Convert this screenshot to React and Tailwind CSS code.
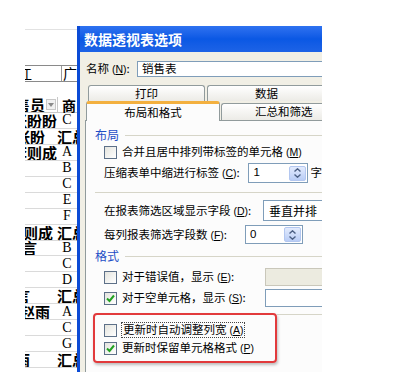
const rows = [
  { name: '张盼盼', code: 'C', pr: 0 },
  { name: '张盼', total: true, pr: 12 },
  { name: '李则成', code: 'A', pr: 0 },
  { name: '', code: 'B' },
  { name: '', code: 'C' },
  { name: '', code: 'E' },
  { name: '', code: 'F' },
  { name: '李则成', total: true, pr: 4 },
  { name: '刘语言', code: 'B', pr: 20 },
  { name: '', code: 'C' },
  { name: '', code: 'D' },
  { name: '刘语言', total: true, pr: 27 },
  { name: '赵雨', code: 'A', pr: 7 },
  { name: '', code: 'C' },
  { name: '', code: 'G' },
  { name: '赵雨', total: true, pr: 27 },
  { name: '', code: '' },
];

function Sheet() {
  return (
    <div className="mt-[26px] flex h-[346px] w-[52px] shrink-0 flex-col overflow-hidden bg-white font-['Noto_Sans_CJK_SC',sans-serif] text-black">
      <div className="h-[4px] shrink-0 border-b border-[#e2e2e2]" />
      <div className="mt-[35px] flex h-[17px] shrink-0 border-y border-[#8a8a8a]">
        <div className="flex w-[7px] shrink-0 justify-end overflow-hidden whitespace-nowrap text-[14px] leading-[15px]">江</div>
        <div className="w-[30px] shrink-0 border-r border-[#9a9a9a]" />
        <div className="shrink-0 pl-[1px] text-[14px] leading-[15px]">广</div>
      </div>
      <div className="mt-[15px] flex h-[16px] shrink-0 border-b border-[#c8c8c8]">
        <div className="flex w-[20px] shrink-0 items-center justify-end overflow-hidden whitespace-nowrap text-[15px] font-bold leading-none">售员</div>
        <div className="ml-[1px] mt-[2px] flex h-[11px] w-[10px] shrink-0 items-center justify-center border border-[#c8c8c8] bg-[#f0f0f0]">
          <svg width="6" height="4" viewBox="0 0 6 4"><path d="M0 0h6L3 4z" fill="#8a8a8a" /></svg>
        </div>
        <div className="ml-[1px] w-[20px] shrink-0 border-l border-[#c8c8c8] pl-[4px] text-[14px] font-bold leading-[16px]">商</div>
      </div>
      {rows.map((r, i) => (
        <div key={i} className="flex h-[15.95px] shrink-0 border-b border-[#dadada]">
          <div
            className="flex w-[32px] shrink-0 items-center justify-end overflow-hidden whitespace-nowrap text-[15px] font-bold leading-none"
            style={{ paddingRight: r.pr || 0 }}
          >
            {r.name}
          </div>
          {r.total ? (
            <div className="flex shrink-0 items-center whitespace-nowrap text-[15px] font-bold leading-none">汇总</div>
          ) : (
            <div className="flex w-[20px] shrink-0 items-center justify-center font-['Liberation_Serif',serif] text-[14px] leading-none">{r.code}</div>
          )}
        </div>
      ))}
    </div>
  );
}

function Box({ checked }) {
  return (
    <span className="flex h-[13px] w-[13px] shrink-0 items-center justify-center border border-[#5d7088] bg-gradient-to-br from-[#e4e4de] to-white">
      {checked && (
        <svg width="11" height="11" viewBox="0 0 11 11">
          <path d="M2 5.5 4.5 8 9 2.5" fill="none" stroke="#21a121" strokeWidth="2" />
        </svg>
      )}
    </span>
  );
}

function Spin({ value, w }) {
  return (
    <div className="flex h-full items-center border border-[#7f9db9] bg-white pl-[4px] pr-[1px] text-[11.5px]" style={{ width: w }}>
      <span className="flex-1 font-['Liberation_Sans',sans-serif]">{value}</span>
      <div className="flex h-[15px] w-[17px] flex-col items-center justify-center gap-[2px] rounded-[2px] border border-[#b3c7f0] bg-gradient-to-b from-[#e3ebfd] to-[#b9cdf6]">
        <svg width="7" height="4" viewBox="0 0 7 4"><path d="M0.5 3.5 3.5 0.8 6.5 3.5" fill="none" stroke="#4d6185" strokeWidth="1.4" /></svg>
        <svg width="7" height="4" viewBox="0 0 7 4"><path d="M0.5 0.5 3.5 3.2 6.5 0.5" fill="none" stroke="#4d6185" strokeWidth="1.4" /></svg>
      </div>
    </div>
  );
}

function Key({ k }) {
  return (
    <span className="font-['Liberation_Sans',sans-serif] text-[10.5px]">
      {' '}(<u>{k}</u>)
    </span>
  );
}

function Header({ text }) {
  return (
    <div className="flex h-[16px] items-center pl-[9px]">
      <span className="text-[12px] leading-none text-[#1f4fc6]">{text}</span>
      <div className="ml-[6px] h-px flex-1 bg-[#d6d5c8]" />
    </div>
  );
}

function Dialog() {
  return (
    <div className="mt-[26px] flex h-[346px] w-[245px] shrink-0 flex-col overflow-hidden border-l-[3px] border-[#0b4bd6] bg-[#f1efe5] font-['Noto_Sans_CJK_SC',sans-serif] text-[11.5px] leading-none text-black">
      <div className="flex h-[26px] shrink-0 items-center bg-gradient-to-b from-[#2e72f0] via-[#0a58e4] to-[#1d63e6] pl-[4px] text-[14px] font-bold text-white">
        数据透视表选项
      </div>
      <div className="mt-[9px] flex h-[16px] items-center pl-[6px]">
        <span className="w-[51px] whitespace-nowrap">名称<Key k="N" />:</span>
        <div className="flex h-full flex-1 items-center border border-r-0 border-[#7f9db9] bg-white pl-[4px]">销售表</div>
      </div>
      <div className="mt-[8px] flex h-[16px] gap-[2px] pl-[8px]">
        <div className="flex w-[117px] items-center justify-center rounded-t-[3px] border border-b-0 border-[#919b9c] bg-gradient-to-b from-white to-[#ecebe6]">打印</div>
        <div className="flex flex-1 items-center rounded-tl-[3px] border border-r-0 border-b-0 border-[#919b9c] bg-gradient-to-b from-white to-[#ecebe6] pl-[47px]">数据</div>
      </div>
      <div className="flex h-[19px] pl-[6px]">
        <div className="relative z-10 -mb-px flex h-[20px] w-[134px] items-center justify-center rounded-t-[3px] border-x border-t-[3px] border-x-[#919b9c] border-t-[#f3b03f] bg-[#fcfcfc]">布局和格式</div>
        <div className="ml-px mt-[2px] flex flex-1 items-center rounded-tl-[3px] border border-r-0 border-b-0 border-[#919b9c] bg-gradient-to-b from-white to-[#ecebe6] pl-[33px]">汇总和筛选</div>
      </div>
      <div className="ml-[5px] flex flex-1 flex-col border-l border-t border-[#919b9c] bg-[#fcfcfc]">
        <div className="mt-[6px]"><Header text="布局" /></div>
        <div className="mt-[1px] flex h-[16px] items-center gap-[5px] pl-[18px]">
          <Box />
          <span className="whitespace-nowrap">合并且居中排列带标签的单元格<Key k="M" /></span>
        </div>
        <div className="mt-[3px] flex h-[20px] items-center pl-[18px]">
          <span className="w-[147px] whitespace-nowrap">压缩表单中缩进行标签<Key k="C" />:</span>
          <Spin value="1" w={60} />
          <span className="ml-[3px]">字</span>
        </div>
        <div className="ml-[9px] mt-[9px] h-px bg-[#d6d5c8]" />
        <div className="mt-[7px] flex h-[21px] items-center pl-[18px]">
          <span className="w-[159px] whitespace-nowrap">在报表筛选区域显示字段<Key k="D" />:</span>
          <div className="flex h-full flex-1 items-center border border-r-0 border-[#7f9db9] bg-white pl-[5px] text-[12px]">垂直并排</div>
        </div>
        <div className="mt-[4px] flex h-[19px] items-center pl-[18px]">
          <span className="w-[141px] whitespace-nowrap">每列报表筛选字段数<Key k="F" />:</span>
          <Spin value="0" w={58} />
        </div>
        <div className="mt-[4px]"><Header text="格式" /></div>
        <div className="mt-[4px] flex h-[18px] items-center pl-[18px]">
          <div className="flex w-[161px] items-center gap-[5px]">
            <Box />
            <span className="whitespace-nowrap">对于错误值，显示<Key k="E" />:</span>
          </div>
          <div className="h-full flex-1 border border-r-0 border-[#c9c7ba] bg-[#ecebe0]" />
        </div>
        <div className="mt-[3px] flex h-[18px] items-center pl-[18px]">
          <div className="flex w-[161px] items-center gap-[5px]">
            <Box checked />
            <span className="whitespace-nowrap">对于空单元格，显示<Key k="S" />:</span>
          </div>
          <div className="h-full flex-1 border border-r-0 border-[#7f9db9] bg-white" />
        </div>
        <div className="mt-[6px] flex">
          <div className="ml-[7px] flex h-[50px] w-[184px] flex-col rounded-[4px] border-2 border-[#e23a3c] pl-[9px] pt-[6px] shadow-[1px_2px_3px_rgba(0,0,0,0.25)]">
            <div className="flex h-[18px] items-center gap-[4px]">
              <Box />
              <span className="whitespace-nowrap border border-dotted border-[#444] px-px py-[1px]">更新时自动调整列宽<Key k="A" /></span>
            </div>
            <div className="flex h-[18px] items-center gap-[5px]">
              <Box checked />
              <span className="whitespace-nowrap">更新时保留单元格格式<Key k="P" /></span>
            </div>
          </div>
          <div className="mt-[1px] h-px flex-1 bg-[#d6d5c8]" />
        </div>
      </div>
    </div>
  );
}

export default function App() {
  return (
    <div className="flex h-[381px] w-[409px] items-start overflow-hidden bg-white pl-[25px]">
      <Sheet />
      <Dialog />
    </div>
  );
}
